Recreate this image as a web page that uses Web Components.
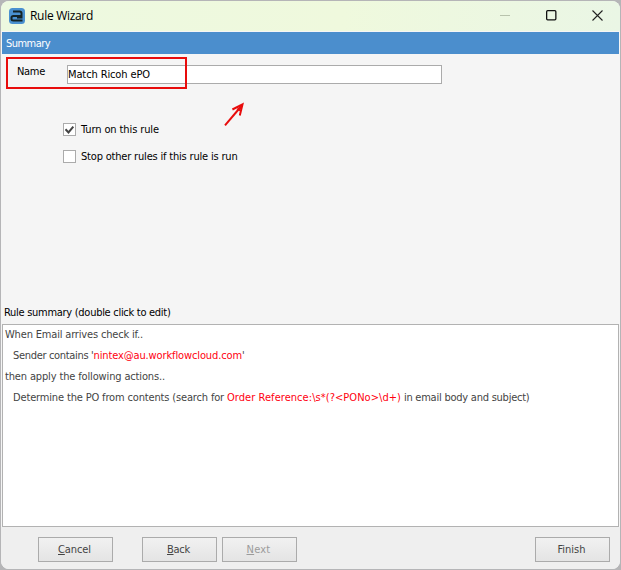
<!DOCTYPE html>
<html lang="en"><head><meta charset="utf-8"><title>Rule Wizard</title>
<style>
html,body{margin:0;width:621px;height:570px;overflow:hidden;background:#b5b5b7}
body{font:11px/14px "DejaVu Sans Condensed","DejaVu Sans",sans-serif;font-stretch:condensed;color:#000}
</style></head><body>
<rule-wizard></rule-wizard>
<script>
const define=(name,markup,after)=>customElements.define(name,class extends HTMLElement{
  connectedCallback(){
    if(this.shadowRoot)return;
    const root=this.attachShadow({mode:'open'});
    root.innerHTML=markup;
    if(after)after(this,root);
  }
});

// A single line of text whose tracking is set so that it takes the given width.
define('ui-text','<style>:host{display:inline-block;white-space:pre;font-variant-ligatures:none}</style><slot></slot>',el=>{
  const target=+el.getAttribute('w');
  const natural=el.getBoundingClientRect().width;
  el.style.letterSpacing=(target-natural)/el.textContent.length+'px';
});

define('title-bar',`<style>
:host{display:flex;align-items:center;height:30px;box-sizing:border-box;padding:0 17px 1px 8px;background:linear-gradient(90deg,#edf9e0,#eff9dd 55%,#eaf6e5);font:12px/16px "Open Sans","Noto Sans",sans-serif}
.logo{width:16px;height:16px;margin-right:5px}.name{flex:1}
.controls{display:flex;gap:35px;align-items:center}svg{display:block}
</style>
<svg class="logo" viewBox="0 0 16 16"><rect width="16" height="16" rx="3.500" fill="#4a90d0"/><path d="M4 3.500H10.500Q12.500 3.500 12.500 5.200V8H4.500Q2.500 8 2.500 9.500V11Q2.500 12.500 4.500 12.500H13.500M12.500 6V9.500H8" fill="none" stroke="#142326" stroke-width="2"/></svg>
<div class="name"><ui-text w="63">Rule Wizard</ui-text></div>
<div class="controls">
<svg width="11" height="11"><path d="M0 5.500h10" stroke="#b8c3ad"/></svg>
<svg width="11" height="11"><rect x=".65" y=".65" width="9.200" height="9.200" rx="1" fill="none" stroke="#111" stroke-width="1.300"/></svg>
<svg width="11" height="11"><path d="M.5.5l10 10M10.500.5l-10 10" stroke="#222" stroke-width="1.100"/></svg>
</div>`);

define('section-header',`<style>:host{display:block;height:22px;box-sizing:border-box;margin:1px 1px 0;padding:5px 4px 0;background:#4b8ecd;color:#fff}</style><slot></slot>`);

define('name-field',`<style>
:host{display:flex;padding:11px 0 0 16px;color:#000}.label{width:50px}
.input{box-sizing:border-box;width:375px;height:19px;border:1px solid #ababab;background:#fff;padding:2px 0 0}
</style><div class="label"><ui-text w="28">Name</ui-text></div><div class="input"><slot></slot></div>`);

define('check-option',`<style>
:host{display:flex;height:13px;align-items:center;gap:5px;color:#000}
.box{width:11px;height:11px;border:1px solid #ababab;background:#fff}
svg{display:none}:host([checked]) svg{display:block}
</style><div class="box"><svg width="11" height="11"><path d="M1.500 5.300l3 3.200L9.300 2.700" fill="none" stroke="#444" stroke-width="2"/></svg></div><slot></slot>`);

define('rule-list',`<style>
:host{display:flex;flex-direction:column;box-sizing:border-box;height:203px;margin:0 1px;border:1px solid #b2b2b2;background:#fff;color:#444;padding:0 2px}
</style><slot></slot>`);
define('rule-line',`<style>:host{display:flex;height:21px;align-items:center;box-sizing:border-box;padding-bottom:2px}:host([nested]){padding-left:8px}::slotted(.value){color:#ff0010}</style><slot></slot>`);

define('wizard-button',`<style>
:host{display:flex;justify-content:center;align-items:center;box-sizing:border-box;width:75px;height:25px;padding-right:2px;border:1px solid #ababab;background:linear-gradient(#f1f1f1,#e4e4e4);color:#444}
:host([disabled]){color:#9b9b9b}
</style><slot></slot>`);

define('red-frame','<style>:host{position:absolute;left:5px;top:56px;width:177px;height:28px;border:2px solid #e80c0c}</style>');
define('red-arrow',`<style>:host{position:absolute;left:223px;top:101px}svg{display:block}</style>
<svg width="22" height="25"><path d="M1 23.300L17 4.500" fill="none" stroke="#e80c0c" stroke-width="2"/><path d="M8.400 7.500L18.500 2.300L15.800 13.500" fill="none" stroke="#e80c0c" stroke-width="2"/><path d="M18.800 2l-6.300 5.200 3.400 2z" fill="#e80c0c"/></svg>`);

define('rule-wizard',`<style>
:host{display:flex;flex-direction:column;position:relative;box-sizing:border-box;width:619px;height:568px;margin:1px 0 0 1px;border-radius:8px;background:#f5f5f5;overflow:hidden}
.options{display:flex;flex-direction:column;gap:14px;padding:39px 0 0 62px}
.caption{margin-top:auto;padding:0 0 4px 3px;color:#000}
.footer{display:flex;height:42px;box-sizing:border-box;padding:10px 10px 0 37px;background:#efefef}
.back{margin:0 5px 0 29px}.finish{margin-left:auto}u{text-underline-offset:1px;text-decoration-thickness:1px}
</style>
<title-bar></title-bar>
<section-header><ui-text w="44">Summary</ui-text></section-header>
<name-field><ui-text w="82">Match Ricoh ePO</ui-text></name-field>
<div class="options">
<check-option checked><ui-text w="78">Turn on this rule</ui-text></check-option>
<check-option><ui-text w="156.500">Stop other rules if this rule is run</ui-text></check-option>
</div>
<div class="caption"><ui-text w="166.500">Rule summary (double click to edit)</ui-text></div>
<rule-list>
<rule-line><ui-text w="138">When Email arrives check if..</ui-text></rule-line>
<rule-line nested><ui-text w="80.500">Sender contains '</ui-text><ui-text class="value" w="148.500">nintex@au.workflowcloud.com</ui-text><ui-text w="2">'</ui-text></rule-line>
<rule-line><ui-text w="160">then apply the following actions..</ui-text></rule-line>
<rule-line nested><ui-text w="214">Determine the PO from contents (search for </ui-text><ui-text class="value" w="174">Order Reference:\\s*(?&lt;PONo&gt;\\d+)</ui-text><ui-text w="128.500"> in email body and subject)</ui-text></rule-line>
</rule-list>
<div class="footer">
<wizard-button><ui-text w="33"><u>C</u>ancel</ui-text></wizard-button>
<wizard-button class="back"><ui-text w="23"><u>B</u>ack</ui-text></wizard-button>
<wizard-button disabled><ui-text w="24"><u>N</u>ext</ui-text></wizard-button>
<wizard-button class="finish"><ui-text w="28">Finish</ui-text></wizard-button>
</div>
<red-frame></red-frame><red-arrow></red-arrow>`);
</script></body></html>
